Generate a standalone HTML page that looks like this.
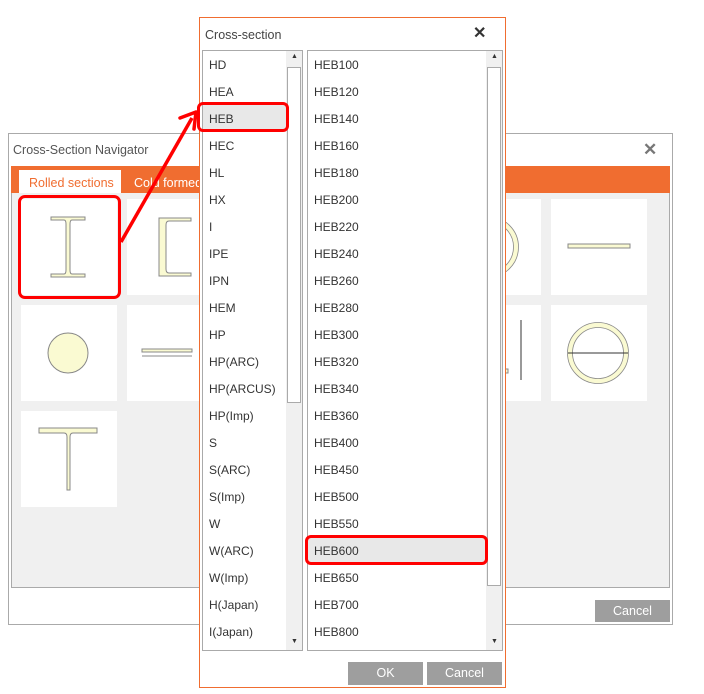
<!DOCTYPE html>
<html><head><meta charset="utf-8"><style>
*{box-sizing:border-box;margin:0;padding:0}
body{width:704px;height:694px;background:#fff;position:relative;overflow:hidden;font-family:"Liberation Sans",sans-serif;font-size:12px;color:#333}
.a{position:absolute}
.tile{position:absolute;width:96px;height:96px;background:#fff}
.item{position:absolute;left:6px;height:27px;line-height:29px}
.btn{position:absolute;background:#9e9e9e;color:#fff;text-align:center;font-size:12.5px}
</style></head><body>
<div class="a" style="left:8px;top:133px;width:665px;height:492px;border:1px solid #aaa;background:#fff"></div>
<div class="a" style="left:13px;top:143px;font-size:12.5px;color:#555">Cross-Section Navigator</div>
<div class="a" style="left:643px;top:140px;font-size:17px;color:#777;font-weight:bold">✕</div>
<div class="a" style="left:11px;top:166px;width:659px;height:28px;background:#f06d30"></div>
<div class="a" style="left:19px;top:170px;width:102px;height:24px;background:#fff;color:#f06d30;font-size:12.5px;padding:6px 0 0 10px">Rolled sections</div>
<div class="a" style="left:134px;top:176px;color:#fff;font-size:12.5px">Cold formed</div>
<div class="a" style="left:11px;top:193px;width:659px;height:395px;background:#f0f0f0;border:1px solid #aaa;border-top:none"></div>
<div class="tile" style="left:21px;top:199px"><svg width="96" height="96"><path d="M30 18h34v3H51q-2 0-2 4v46q0 4 2 4h13v3H30v-3h13q2 0 2-4V25q0-4-2-4H30z" fill="#fafad2" stroke="#888"/></svg></div>
<div class="tile" style="left:127px;top:199px"><svg width="96" height="96"><path d="M32 19h32v3H42q-3 0-3 4v44q0 4 3 4h22v3H32z" fill="#fafad2" stroke="#888"/></svg></div>
<div class="tile" style="left:21px;top:305px"><svg width="96" height="96"><circle cx="47" cy="48" r="20" fill="#fafad2" stroke="#888"/></svg></div>
<div class="tile" style="left:127px;top:305px"><svg width="96" height="96"><rect x="15" y="44" width="50" height="3" fill="#fafad2" stroke="#888"/><path d="M15 51h50" stroke="#888"/></svg></div>
<div class="tile" style="left:21px;top:411px"><svg width="96" height="96"><path d="M18 17h58v5H52q-3 0-3 4v53h-3V26q0-4-3-4H18z" fill="#fafad2" stroke="#888"/></svg></div>
<div class="tile" style="left:445px;top:199px"><svg width="96" height="96"><circle cx="43" cy="48" r="28" fill="none" stroke="#fafad2" stroke-width="5"/><circle cx="43" cy="48" r="30.5" fill="none" stroke="#888" stroke-width=".8"/><circle cx="43" cy="48" r="25.5" fill="none" stroke="#888" stroke-width=".8"/></svg></div>
<div class="tile" style="left:551px;top:199px"><svg width="96" height="96"><rect x="17" y="45" width="62" height="4" fill="#fafad2" stroke="#888"/></svg></div>
<div class="tile" style="left:445px;top:305px"><svg width="96" height="96"><path d="M76 15v60" stroke="#333"/><rect x="55" y="64" width="8" height="4" fill="#fafad2" stroke="#888"/></svg></div>
<div class="tile" style="left:551px;top:305px"><svg width="96" height="96"><circle cx="47" cy="48" r="28" fill="none" stroke="#fafad2" stroke-width="5"/><circle cx="47" cy="48" r="30.5" fill="none" stroke="#888" stroke-width=".8"/><circle cx="47" cy="48" r="25.5" fill="none" stroke="#888" stroke-width=".8"/><path d="M17 48h60" stroke="#333"/></svg></div>
<div class="btn" style="left:595px;top:600px;width:75px;height:22px;line-height:22px">Cancel</div>
<div class="a" style="left:199px;top:17px;width:307px;height:671px;border:1px solid #f06d30;background:#fff"></div>
<div class="a" style="left:205px;top:28px;font-size:12.5px;color:#444">Cross-section</div>
<div class="a" style="left:473px;top:23px;font-size:16px;color:#333;font-weight:bold">✕</div>
<div class="a" style="left:202px;top:50px;width:101px;height:601px;border:1px solid #aaa;background:#fff">
 <div class="a" style="left:83px;top:0;width:16px;height:599px;background:#f0f0f0"></div>
 <div class="a" style="left:84px;top:16px;width:14px;height:336px;background:#fff;border:1px solid #aaa"></div>
 <div class="a" style="left:88px;top:2px;font-size:7px;color:#333">▲</div>
 <div class="a" style="left:88px;top:587px;font-size:7px;color:#333">▼</div>
 <div class="a" style="left:0;top:53px;width:84px;height:27px;background:#e8e8e8"></div>
 <div class="item" style="top:0">HD</div><div class="item" style="top:27px">HEA</div><div class="item" style="top:54px">HEB</div><div class="item" style="top:81px">HEC</div><div class="item" style="top:108px">HL</div><div class="item" style="top:135px">HX</div><div class="item" style="top:162px">I</div><div class="item" style="top:189px">IPE</div><div class="item" style="top:216px">IPN</div><div class="item" style="top:243px">HEM</div><div class="item" style="top:270px">HP</div><div class="item" style="top:297px">HP(ARC)</div><div class="item" style="top:324px">HP(ARCUS)</div><div class="item" style="top:351px">HP(Imp)</div><div class="item" style="top:378px">S</div><div class="item" style="top:405px">S(ARC)</div><div class="item" style="top:432px">S(Imp)</div><div class="item" style="top:459px">W</div><div class="item" style="top:486px">W(ARC)</div><div class="item" style="top:513px">W(Imp)</div><div class="item" style="top:540px">H(Japan)</div><div class="item" style="top:567px">I(Japan)</div>
</div>
<div class="a" style="left:307px;top:50px;width:196px;height:601px;border:1px solid #aaa;background:#fff">
 <div class="a" style="left:178px;top:0;width:16px;height:599px;background:#f0f0f0"></div>
 <div class="a" style="left:179px;top:16px;width:14px;height:519px;background:#fff;border:1px solid #aaa"></div>
 <div class="a" style="left:183px;top:2px;font-size:7px;color:#333">▲</div>
 <div class="a" style="left:183px;top:587px;font-size:7px;color:#333">▼</div>
 <div class="a" style="left:0;top:486px;width:178px;height:27px;background:#e8e8e8"></div>
 <div class="item" style="top:0">HEB100</div><div class="item" style="top:27px">HEB120</div><div class="item" style="top:54px">HEB140</div><div class="item" style="top:81px">HEB160</div><div class="item" style="top:108px">HEB180</div><div class="item" style="top:135px">HEB200</div><div class="item" style="top:162px">HEB220</div><div class="item" style="top:189px">HEB240</div><div class="item" style="top:216px">HEB260</div><div class="item" style="top:243px">HEB280</div><div class="item" style="top:270px">HEB300</div><div class="item" style="top:297px">HEB320</div><div class="item" style="top:324px">HEB340</div><div class="item" style="top:351px">HEB360</div><div class="item" style="top:378px">HEB400</div><div class="item" style="top:405px">HEB450</div><div class="item" style="top:432px">HEB500</div><div class="item" style="top:459px">HEB550</div><div class="item" style="top:486px">HEB600</div><div class="item" style="top:513px">HEB650</div><div class="item" style="top:540px">HEB700</div><div class="item" style="top:567px">HEB800</div>
</div>
<div class="btn" style="left:348px;top:662px;width:75px;height:23px;line-height:23px">OK</div>
<div class="btn" style="left:427px;top:662px;width:75px;height:23px;line-height:23px">Cancel</div>
<div class="a" style="left:18px;top:195px;width:103px;height:104px;border:3px solid #f00;border-radius:7px"></div>
<div class="a" style="left:197px;top:102px;width:92px;height:30px;border:3px solid #f00;border-radius:6px"></div>
<div class="a" style="left:305px;top:535px;width:183px;height:30px;border:3px solid #f00;border-radius:6px"></div>
<svg class="a" style="left:0;top:0" width="704" height="694"><path d="M121 242L192 118" stroke="#f00" stroke-width="3.5"/><path d="M196 112l-16 6M196 112l-2 17" stroke="#f00" stroke-width="3.5" stroke-linecap="round"/></svg>
</body></html>
